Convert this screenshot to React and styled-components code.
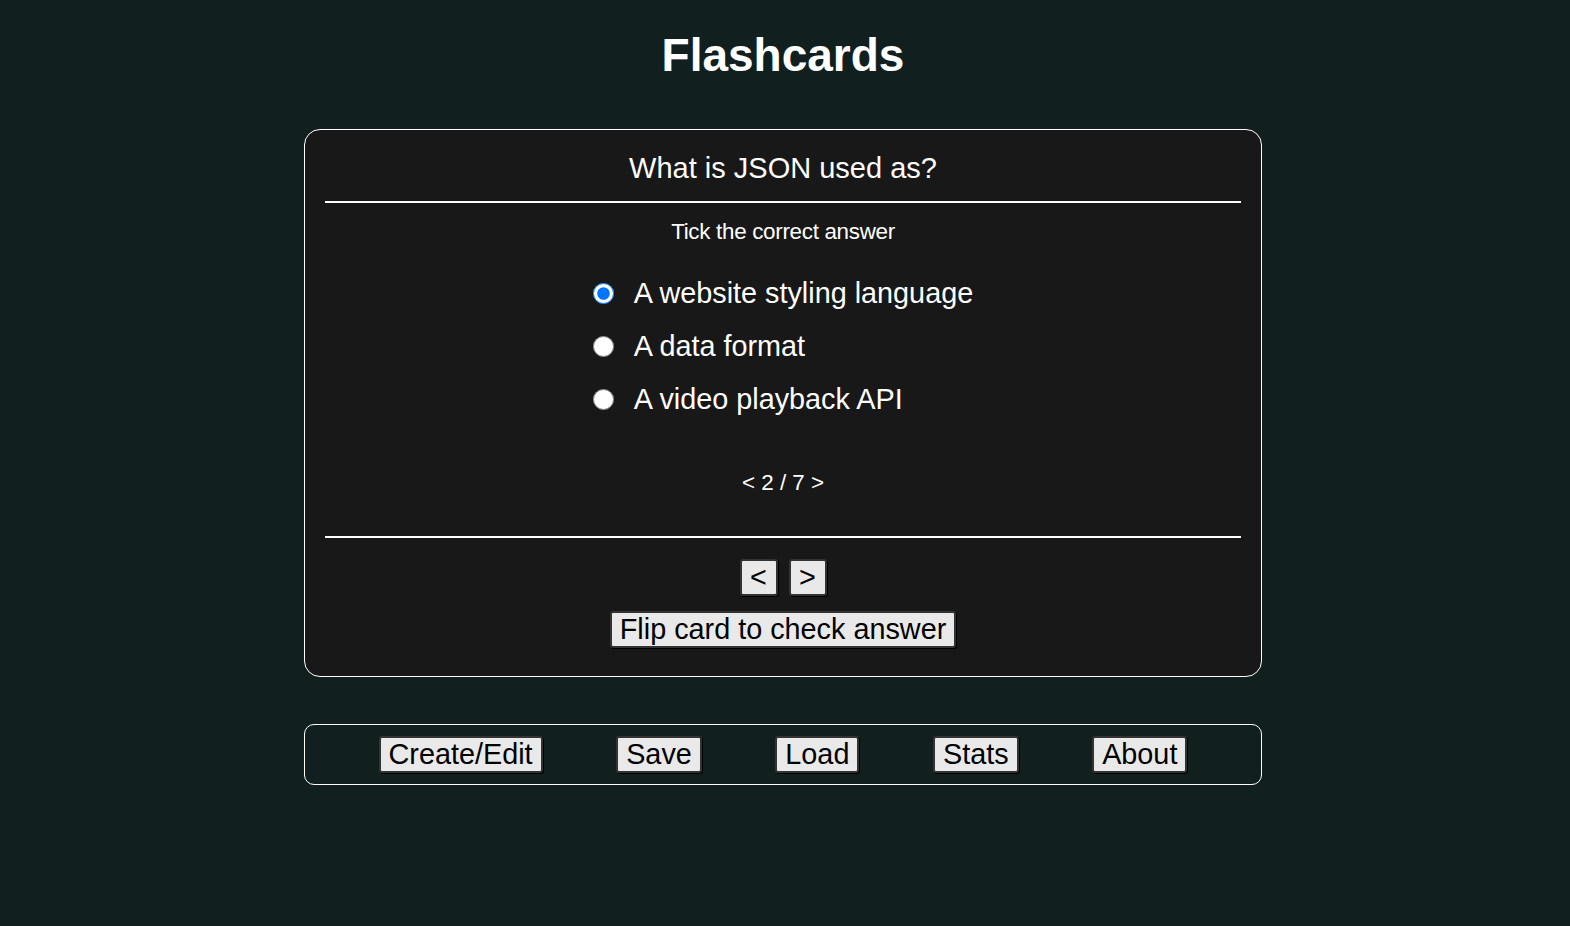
import styled, { createGlobalStyle } from "styled-components";
import { useState } from "react";

const GlobalStyle = createGlobalStyle`
  html, body {
    margin: 0;
    padding: 0;
    background: #121f1f;
    font-family: "Liberation Sans", Arial, sans-serif;
    color: #ffffff;
  }
`;

const options = [
  "A website styling language",
  "A data format",
  "A video playback API",
];

const menu = ["Create/Edit", "Save", "Load", "Stats", "About"];

export default function App() {
  const [picked, setPicked] = useState(0);

  return (
    <Page>
      <GlobalStyle />
      <Title>Flashcards</Title>

      <Card>
        <Question>What is JSON used as?</Question>
        <Body>
          <Hint>Tick the correct answer</Hint>
          <Options>
            {options.map((text, index) => (
              <Option key={index}>
                <Radio
                  type="radio"
                  name="answer"
                  checked={picked === index}
                  onChange={() => setPicked(index)}
                />
                {text}
              </Option>
            ))}
          </Options>
          <Counter>&lt; 2 / 7 &gt;</Counter>
        </Body>
        <Footer>
          <NavRow>
            <NavButton>&lt;</NavButton>
            <NavButton>&gt;</NavButton>
          </NavRow>
          <Button>Flip card to check answer</Button>
        </Footer>
      </Card>

      <MenuBar>
        {menu.map((item) => (
          <Button key={item}>{item}</Button>
        ))}
      </MenuBar>
    </Page>
  );
}

const Page = styled.div`
  width: 958px;
  margin-left: calc(50% - 481px);
  padding-top: 29px;
  padding-bottom: 40px;
`;

const Title = styled.h1`
  margin: 0 0 47px;
  text-align: center;
  font-size: 46px;
  line-height: 53px;
  font-weight: bold;
`;

const Card = styled.div`
  background: #181818;
  border: 1px solid #ffffff;
  border-radius: 16px;
  padding: 0 20px;
`;

const Question = styled.div`
  padding: 21px 0 16px;
  border-bottom: 2px solid #ffffff;
  text-align: center;
  font-size: 29px;
  line-height: 34px;
`;

const Body = styled.div`
  display: flex;
  flex-direction: column;
  align-items: center;
  padding: 16px 0 40px;
  border-bottom: 2px solid #ffffff;
`;

const Hint = styled.div`
  font-size: 22.4px;
  line-height: 26px;
  letter-spacing: -0.3px;
`;

const Options = styled.div`
  display: flex;
  flex-direction: column;
  margin-top: 22px;
`;

const Option = styled.label`
  display: flex;
  align-items: center;
  height: 53px;
  font-size: 28.8px;
  cursor: pointer;
`;

const Radio = styled.input`
  width: 21px;
  height: 21px;
  margin: 0 20px 0 0;
`;

const Counter = styled.div`
  margin-top: 44px;
  font-size: 22.4px;
  line-height: 26px;
`;

const Footer = styled.div`
  display: flex;
  flex-direction: column;
  align-items: center;
  gap: 15px;
  padding: 21px 0 28px;
`;

const NavRow = styled.div`
  display: flex;
  gap: 11px;
`;

const Button = styled.button`
  font-family: "Liberation Sans", Arial, sans-serif;
  font-size: 28.8px;
  line-height: 31px;
  height: 37px;
  padding: 0 8px;
  color: #000000;
  background: #e9e9e9;
  border: 2px solid #333333;
  border-radius: 3px;
  box-shadow: 1px 1px 0 #000000;
  cursor: pointer;
`;

const NavButton = styled(Button)`
  width: 38px;
  padding: 0;
`;

const MenuBar = styled.div`
  display: flex;
  justify-content: space-evenly;
  align-items: center;
  margin-top: 47px;
  height: 59px;
  border: 1px solid #ffffff;
  border-radius: 10px;
`;
